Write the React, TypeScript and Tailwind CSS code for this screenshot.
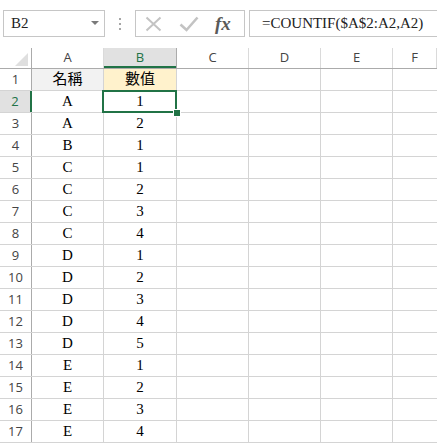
import React from "react";

const rows: [string, string][] = [
  ["A", "1"],
  ["A", "2"],
  ["B", "1"],
  ["C", "1"],
  ["C", "2"],
  ["C", "3"],
  ["C", "4"],
  ["D", "1"],
  ["D", "2"],
  ["D", "3"],
  ["D", "4"],
  ["D", "5"],
  ["E", "1"],
  ["E", "2"],
  ["E", "3"],
  ["E", "4"],
];

const serif = "font-['Liberation_Serif','Noto_Sans_CJK_TC',serif]";
const sans = "font-['Open_Sans','Noto_Sans',sans-serif]";

const FormulaBar = () => (
  <div className="flex h-[48px] items-start bg-white pt-[10px]">
    <div className="ml-[3px] flex h-[27px] w-[102px] items-center justify-between border border-[#c6c6c6] pl-[7px] pr-[5px]">
      <span className={`${serif} text-[15px] text-[#222]`}>B2</span>
      <svg width="8" height="5" viewBox="0 0 8 5">
        <path d="M0 0h8L4 4z" fill="#7a7a7a" />
      </svg>
    </div>
    <div className="ml-[13px] mt-[8px] flex w-[4px] flex-col items-center gap-[3px]">
      <span className="h-[2px] w-[2px] bg-[#a6a6a6]" />
      <span className="h-[2px] w-[2px] bg-[#a6a6a6]" />
      <span className="h-[2px] w-[2px] bg-[#a6a6a6]" />
    </div>
    <div className="ml-[13px] flex h-[27px] w-[110px] items-center border border-[#c6c6c6]">
      <svg className="ml-[9px]" width="17" height="16" viewBox="0 0 17 16">
        <path d="M1.5 1.5l14 13M15.5 1.5l-14 13" stroke="#c3c3c3" strokeWidth="2" fill="none" />
      </svg>
      <svg className="ml-[17px]" width="20" height="16" viewBox="0 0 20 16">
        <path d="M1.5 8.5l6 5.5L18.5 1.5" stroke="#c3c3c3" strokeWidth="2.6" fill="none" />
      </svg>
      <span className="ml-[16px] font-['Liberation_Serif',serif] text-[19px] italic leading-none font-bold text-[#5a5a5a]">
        fx
      </span>
    </div>
    <div className="ml-[4px] flex h-[27px] flex-1 items-center border border-r-0 border-[#c6c6c6] pl-[12px]">
      <span className={`${serif} text-[15px] text-[#222]`}>=COUNTIF($A$2:A2,A2)</span>
    </div>
  </div>
);

const cols = ["A", "B", "C", "D", "E", "F"];
const widths = ["w-[72px]", "w-[73px]", "w-[72px]", "w-[72px]", "w-[72px]", "flex-1"];

const Sheet = () => (
  <div className="flex flex-col">
    <div className="flex h-[21px] border-b border-[#ababab]">
      <div className="relative w-[32px] shrink-0 border-r border-[#ababab]">
        <svg className="absolute bottom-[2px] right-[3px]" width="13" height="13" viewBox="0 0 13 13">
          <path d="M13 0V13H0z" fill="#dfdfdf" />
        </svg>
      </div>
      {cols.map((c, i) => (
        <div
          key={c}
          className={`${widths[i]} shrink-0 flex items-center justify-center ${sans} text-[13px] ${
            c === "B"
              ? "bg-[#e1e1e1] text-[#217346] shadow-[inset_0_-2px_0_#217346] border-r border-[#ababab]"
              : "text-[#444] border-r border-[#dadada]"
          }`}
        >
          {c}
        </div>
      ))}
    </div>
    {[["名稱", "數值"] as [string, string], ...rows].map((r, idx) => {
      const n = idx + 1;
      return (
        <div key={n} className="flex h-[22px] border-b border-[#d4d4d4]">
          <div
            className={`w-[32px] shrink-0 flex items-center justify-center ${sans} text-[13px] border-r ${
              n === 2
                ? "bg-[#e1e1e1] text-[#217346] border-[#217346] border-r-2"
                : "text-[#444] border-[#ababab]"
            }`}
          >
            {n}
          </div>
          <div
            className={`w-[72px] shrink-0 flex items-center justify-center border-r border-[#d4d4d4] ${serif} text-[15px] text-black ${
              n === 1 ? "bg-[#f2f2f2]" : ""
            }`}
          >
            {r[0]}
          </div>
          <div
            className={`relative w-[73px] shrink-0 flex items-center justify-center border-r border-[#d4d4d4] ${serif} text-[15px] text-black ${
              n === 1 ? "bg-[#fff2cc]" : ""
            }`}
          >
            {r[1]}
            {n === 2 && (
              <>
                <div className="absolute left-[-2px] top-[-1px] bottom-[-1px] right-[-1px] border-2 border-[#217346]" />
                <div className="absolute right-[-5px] bottom-[-5px] z-10 h-[8px] w-[8px] bg-[#217346] border border-white" />
              </>
            )}
          </div>
          {[0, 1, 2].map((k) => (
            <div key={k} className="w-[72px] shrink-0 border-r border-[#d4d4d4]" />
          ))}
          <div className="flex-1" />
        </div>
      );
    })}
  </div>
);

export default function App() {
  return (
    <div className="h-[444px] w-[437px] overflow-hidden bg-white">
      <FormulaBar />
      <Sheet />
    </div>
  );
}
